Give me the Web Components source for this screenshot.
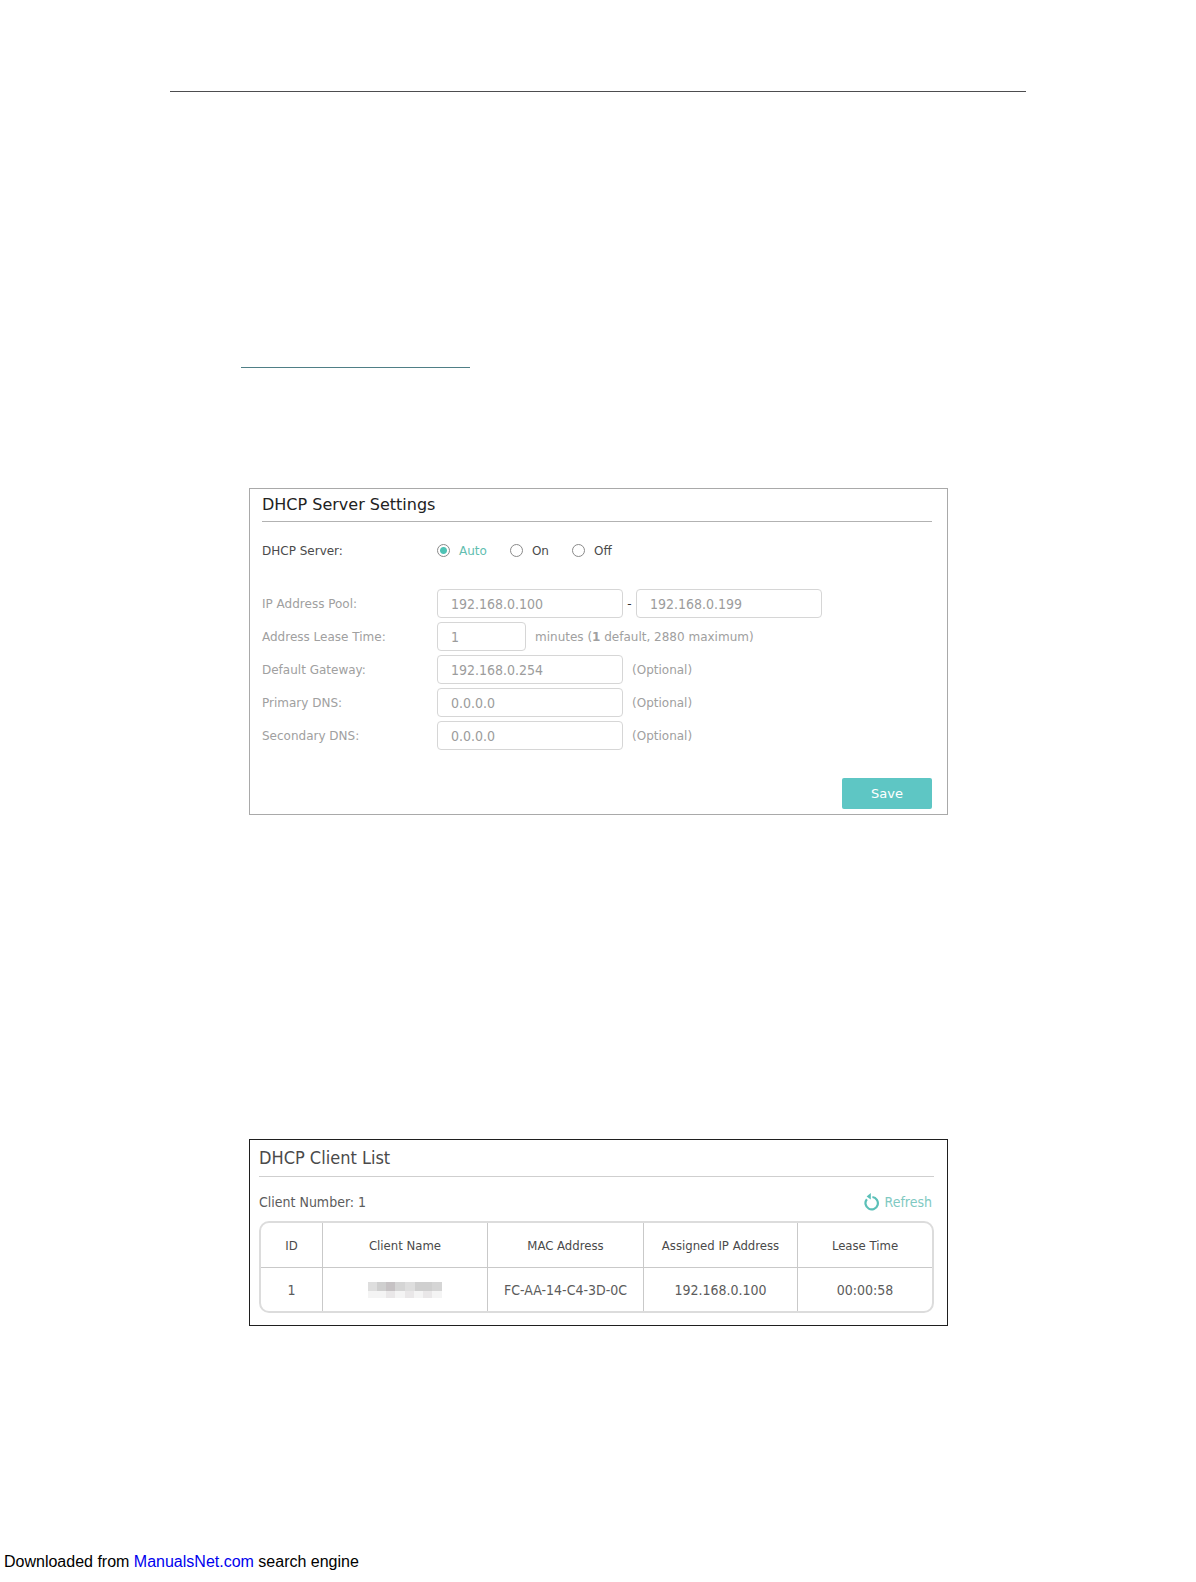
<!DOCTYPE html>
<html lang="en">
<head>
<meta charset="utf-8">
<title>DHCP Server</title>
<style>
  body {
    margin: 0;
    background: #fff;
    font-family: "DejaVu Sans Condensed", "DejaVu Sans", sans-serif;
    font-size: 14px;
    color: #4a4a4a;
  }
</style>
</head>
<body>
<manual-page>
  <dhcp-settings></dhcp-settings>
  <client-list></client-list>
  <page-footer slot="footer"></page-footer>
</manual-page>

<script>
class ManualPage extends HTMLElement {
  constructor() {
    super();
    this.attachShadow({ mode: 'open' });
    this.shadowRoot.innerHTML = `
      <style>
      :host {
        display: flex;
        flex-direction: column;
        min-height: 100vh;
      }

      main {
        margin: 91px 170px 0;
        border-top: 1px solid #4d4d4f;
      }

      .underline {
        width: 229px;
        margin: 275px 0 120px 71px;
        border-top: 1px solid #4f7f86;
      }

      .panels {
        display: flex;
        flex-direction: column;
        gap: 324px;
        margin: 0 78px 0 79px;
      }

      footer {
        margin-top: auto;
      }
      </style>
      <main>
        <div class="underline"></div>
        <div class="panels"><slot></slot></div>
      </main>
      <footer><slot name="footer"></slot></footer>
    `;
  }
}

class DhcpSettings extends HTMLElement {
  constructor() {
    super();
    this.attachShadow({ mode: 'open' });
    this.shadowRoot.innerHTML = `
      <style>
      :host {
        display: block;
        padding: 0 15px 5px 12px;
        border: 1px solid #a9a9a9;
        font-family: "DejaVu Sans", sans-serif;
        font-size: 12px;
      }

      h2 {
        margin: 0 0 14px;
        border-bottom: 1px solid #b2b2b2;
        font-size: 16px;
        font-weight: normal;
        line-height: 32px;
        color: #222;
      }

      form {
        display: flex;
        flex-direction: column;
        gap: 4px;
      }

      .modes {
        display: flex;
        align-items: center;
        height: 29px;
        margin-bottom: 20px;
      }

      .caption {
        width: 175px;
      }

      .modes label {
        display: flex;
        align-items: center;
        gap: 9px;
        margin-right: 23px;
      }

      .modes label:has(:checked) {
        color: #62beb0;
      }

      input[type="radio"] {
        appearance: none;
        box-sizing: border-box;
        width: 13px;
        height: 13px;
        margin: 0;
        border: 1px solid #8a8a8a;
        border-radius: 50%;
      }

      input[type="radio"]:checked {
        background: radial-gradient(circle, #4fc3b5 3px, #fff 4px);
      }
      </style>
      <h2>DHCP Server Settings</h2>
      <form>
        <div class="modes" role="radiogroup" aria-labelledby="mode">
          <span class="caption" id="mode">DHCP Server:</span>
          <label><input type="radio" name="mode" checked>Auto</label>
          <label><input type="radio" name="mode">On</label>
          <label><input type="radio" name="mode">Off</label>
        </div>
        <form-row label="IP Address Pool:" value="192.168.0.100" end="192.168.0.199"></form-row>
        <form-row label="Address Lease Time:" value="1" size="short">minutes (<b>1</b> default, 2880 maximum)</form-row>
        <form-row label="Default Gateway:" value="192.168.0.254">(Optional)</form-row>
        <form-row label="Primary DNS:" value="0.0.0.0">(Optional)</form-row>
        <form-row label="Secondary DNS:" value="0.0.0.0">(Optional)</form-row>
        <save-button>Save</save-button>
      </form>
    `;
  }
}

class FormRow extends HTMLElement {
  constructor() {
    super();
    this.attachShadow({ mode: 'open' });
  }

  connectedCallback() {
    const label = this.getAttribute('label');
    const value = this.getAttribute('value');
    const end = this.getAttribute('end');

    this.shadowRoot.innerHTML = `
      <style>
      :host {
        display: flex;
        align-items: center;
        color: #a0a0a0;
      }

      label {
        width: 175px;
      }

      input {
        box-sizing: border-box;
        width: 186px;
        height: 29px;
        padding: 0 13px;
        border: 1px solid #d6d6d6;
        border-radius: 4px;
        background: #fff;
        font: 14px "DejaVu Sans Condensed", "DejaVu Sans", sans-serif;
        color: #9c9c9c;
      }

      :host([size="short"]) input {
        width: 89px;
      }

      .dash {
        width: 13px;
        text-align: center;
        color: #333;
      }

      .note {
        margin-left: 9px;
      }
      </style>
      <label for="start">${label}</label>
      <input id="start" type="text" value="${value}" disabled>
      ${end
        ? `<span class="dash">-</span><input type="text" value="${end}" aria-label="Pool end" disabled>`
        : '<span class="note"><slot></slot></span>'}
    `;
  }
}

class SaveButton extends HTMLElement {
  constructor() {
    super();
    this.attachShadow({ mode: 'open' });
    this.shadowRoot.innerHTML = `
      <style>
      :host {
        display: flex;
        justify-content: flex-end;
        margin-top: 24px;
      }

      button {
        width: 90px;
        height: 31px;
        padding: 0;
        border: 0;
        border-radius: 2px;
        background: #5ec6c4;
        font: 13px "DejaVu Sans", sans-serif;
        color: #fff;
      }
      </style>
      <button type="button"><slot></slot></button>
    `;
  }
}

class ClientList extends HTMLElement {
  constructor() {
    super();
    this.attachShadow({ mode: 'open' });
    this.shadowRoot.innerHTML = `
      <style>
      :host {
        display: block;
        padding: 0 13px 12px 9px;
        border: 1px solid #1f1f1f;
      }

      h2 {
        margin: 0;
        border-bottom: 1px solid #cfcfcf;
        font-size: 18px;
        font-weight: normal;
        line-height: 36px;
      }

      .bar {
        display: flex;
        align-items: center;
        justify-content: space-between;
        box-sizing: border-box;
        height: 44px;
        padding: 6px 2px 0 0;
        color: #5c5c5c;
      }

      table {
        width: 100%;
        box-sizing: border-box;
        table-layout: fixed;
        border: 2px solid #dcdcdc;
        border-radius: 10px;
        border-spacing: 0;
      }

      th, td {
        height: 43px;
        padding: 0;
        border-left: 1px solid #c9c9c9;
        text-align: center;
      }

      th {
        height: 44px;
        font-size: 13px;
        font-weight: normal;
      }

      td {
        border-top: 1px solid #c9c9c9;
        color: #5c5c5c;
      }

      th:first-child, td:first-child {
        border-left: 0;
      }

      .id {
        width: 61px;
      }

      .name {
        width: 165px;
      }

      .mac {
        width: 156px;
      }

      .ip {
        width: 154px;
      }

      svg {
        display: block;
        margin: 0 auto;
      }
      </style>
      <h2>DHCP Client List</h2>
      <div class="bar">
        <span>Client Number: 1</span>
        <refresh-button>Refresh</refresh-button>
      </div>
      <table>
        <colgroup>
          <col class="id"><col class="name"><col class="mac"><col class="ip"><col>
        </colgroup>
        <thead>
          <tr>
            <th>ID</th>
            <th>Client Name</th>
            <th>MAC Address</th>
            <th>Assigned IP Address</th>
            <th>Lease Time</th>
          </tr>
        </thead>
        <tbody>
          <tr>
            <td>1</td>
            <td>
              <svg width="74" height="16" viewBox="0 0 74 16" role="img" aria-label="Hidden name">
                <path fill="#dedede" d="M0 0h74v9H0z"/>
                <path fill="#cfcfcf" d="M9 0h9v9H9zM47 0h17v9H47z"/>
                <path fill="#c6c2c4" d="M18 0h9v9h-9z"/>
                <path fill="#d5d5d5" d="M27 0h10v9H27zM64 0h10v9H64z"/>
                <path fill="#f4f4f4" d="M0 9h74v7H0z"/>
                <path fill="#e9e7e8" d="M18 9h9v7h-9zM37 9h9v7h-9zM55 9h9v7h-9z"/>
              </svg>
            </td>
            <td>FC-AA-14-C4-3D-0C</td>
            <td>192.168.0.100</td>
            <td>00:00:58</td>
          </tr>
        </tbody>
      </table>
    `;
  }
}

class RefreshButton extends HTMLElement {
  constructor() {
    super();
    this.attachShadow({ mode: 'open' });
    this.shadowRoot.innerHTML = `
      <style>
      :host {
        display: block;
      }

      button {
        display: flex;
        align-items: center;
        gap: 5px;
        padding: 0;
        border: 0;
        background: none;
        font: inherit;
        color: #7fc9c2;
      }
      </style>
      <button type="button">
        <svg width="16" height="18" viewBox="0 0 16 18" fill="none" aria-hidden="true">
          <path d="M2.9 6.2A6.2 6.2 0 1 0 8.4 4" stroke="#5bc0b8" stroke-width="2.2"/>
          <path d="M2.6 3.4L6.8 0v6.6z" fill="#5bc0b8"/>
        </svg>
        <slot></slot>
      </button>
    `;
  }
}

class PageFooter extends HTMLElement {
  constructor() {
    super();
    this.attachShadow({ mode: 'open' });
    this.shadowRoot.innerHTML = `
      <style>
      :host {
        display: block;
        padding: 0 4px 9px;
        font: 16px/22px "Liberation Sans", Arial, sans-serif;
        color: #000;
      }

      a {
        color: #00e;
        text-decoration: none;
      }
      </style>
      Downloaded from <a href="#">ManualsNet.com</a> search engine
    `;
  }
}

customElements.define('manual-page', ManualPage);
customElements.define('form-row', FormRow);
customElements.define('save-button', SaveButton);
customElements.define('dhcp-settings', DhcpSettings);
customElements.define('refresh-button', RefreshButton);
customElements.define('client-list', ClientList);
customElements.define('page-footer', PageFooter);
</script>
</body>
</html>
